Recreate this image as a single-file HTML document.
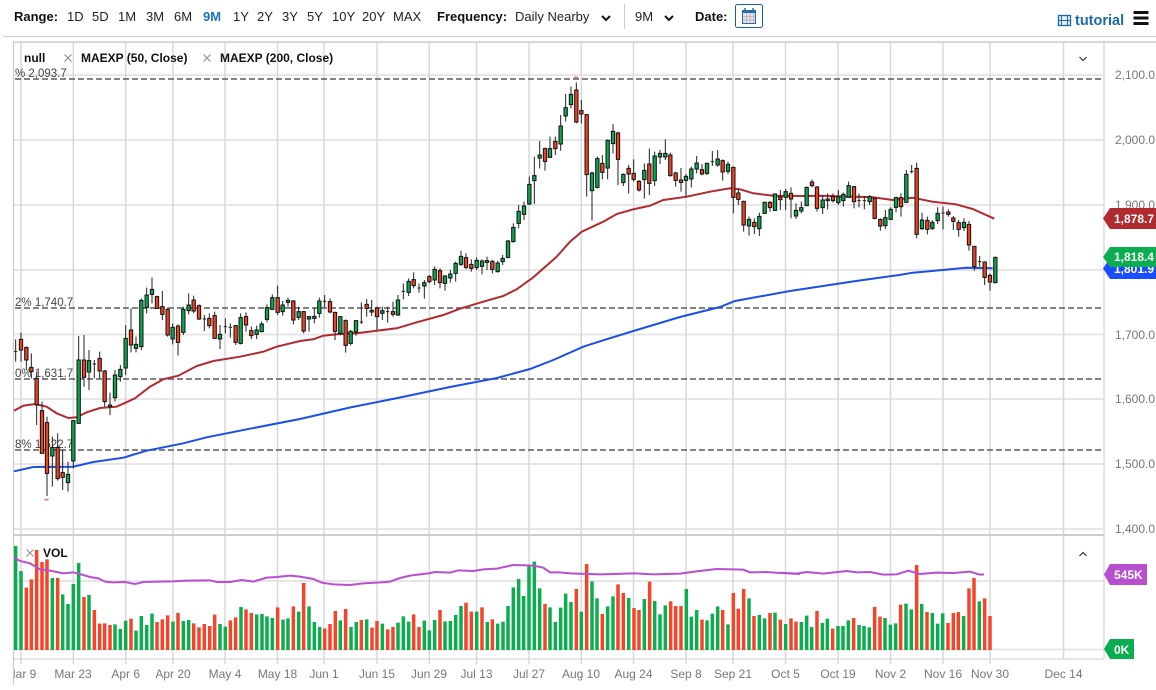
<!DOCTYPE html>
<html><head><meta charset="utf-8"><style>
html,body{margin:0;padding:0;background:#fff;width:1156px;height:690px;overflow:hidden}
svg{display:block;font-family:"Liberation Sans",sans-serif}
.w{fill:none;stroke:#222;stroke-width:3}
.g{fill:#0aa650;stroke:#111;stroke-width:3}
.r{fill:#ee4023;stroke:#111;stroke-width:3}
.vg{fill:none;stroke:#0aae4f;stroke-width:10.5}
.vr{fill:none;stroke:#f4452a;stroke-width:10.5}
.t{font-size:13px;fill:#222}
.b{font-size:13px;font-weight:bold;fill:#111}
.l{font-size:12px;font-weight:bold;fill:#111}
.ax{font-size:12px;fill:#777;text-anchor:middle}
.pr{font-size:12px;fill:#777}
.fb{font-size:11.5px;fill:#444}
.tag{font-size:12px;font-weight:bold;fill:#fff}
</style></head><body>
<svg width="1156" height="690" viewBox="0 0 1156 690" xmlns="http://www.w3.org/2000/svg">
<defs><clipPath id="cl"><rect x="14" y="42" width="1090" height="645"/></clipPath></defs>

<!-- toolbar -->
<text class="b" x="14" y="21">Range:</text>
<g class="t">
<text class="t" x="67" y="21">1D</text><text class="t" x="92" y="21">5D</text><text class="t" x="118" y="21">1M</text><text class="t" x="146" y="21">3M</text><text class="t" x="174" y="21">6M</text>
<text x="203" y="21" style="font-size:13px;font-weight:bold;fill:#1a6fc0">9M</text>
<text class="t" x="233" y="21">1Y</text><text class="t" x="257" y="21">2Y</text><text class="t" x="282" y="21">3Y</text><text class="t" x="307" y="21">5Y</text><text class="t" x="332" y="21">10Y</text><text class="t" x="362" y="21">20Y</text><text class="t" x="393" y="21">MAX</text>
</g>
<text class="b" x="437" y="21">Frequency:</text>
<text class="t" x="515" y="21">Daily Nearby</text>
<path d="M602 16l4 4 4-4" fill="none" stroke="#111" stroke-width="2"/>
<path d="M624.500 4V29" stroke="#ccc" stroke-width="1"/>
<text class="t" x="635" y="21">9M</text>
<path d="M665 16l4 4 4-4" fill="none" stroke="#111" stroke-width="2"/>
<text class="b" x="695" y="21">Date:</text>
<rect x="735.500" y="4.500" width="27" height="23" rx="2" fill="#fff" stroke="#1a5fa0"/>
<rect x="742.500" y="10.500" width="13" height="13" fill="#dbe6f2" stroke="#2a6cab"/>
<rect x="742" y="10" width="14" height="3" fill="#2a6cab"/>
<path d="M745 8v4M753 8v4" stroke="#2a6cab" stroke-width="1.500"/>
<path d="M746.500 13v10M750 13v10M753.500 13v10M743 16.500h12M743 20h12" stroke="#c98f8f" stroke-width=".6"/>
<rect x="1058.500" y="15.500" width="12" height="10" fill="#e8f0f8" stroke="#1a6aaf" stroke-width="1.300"/>
<path d="M1061.500 15.500v10M1067.500 15.500v10M1058.500 20.500h12" stroke="#1a6aaf" stroke-width="1"/>
<text x="1075" y="25" style="font-size:14.500px;font-weight:bold;fill:#1a6aaf">tutorial</text>
<path d="M1133.500 12.500h15M1133.500 18h15M1133.500 23.500h15" stroke="#111" stroke-width="3"/>

<path d="M3 36.500H1156" stroke="#ccc" stroke-width="1"/>
<path d="M13 42H1156" stroke="#ccc" stroke-width="1.500"/>

<!-- grid -->
<path d="M14 75H1104M14 140H1104M14 205H1104M14 270H1104M14 334.500H1104M14 399H1104M14 464H1104M14 529H1104M14 581H1104M14 649.500H1104M14 659H1104" stroke="#e6e6e6" stroke-width="2"/>
<path d="M21 42V664M73.300 42V664M125.700 42V664M173 42V664M225 42V664M277.500 42V664M324 42V664M377 42V664M429.300 42V664M476.500 42V664M529 42V664M581.300 42V664M633.500 42V664M686 42V664M733 42V664M785.500 42V664M838 42V664M890.500 42V664M943 42V664M990 42V664M1063.500 42V659" stroke="#d8d8d8" stroke-width="1.500"/>
<path d="M13.500 42V685" stroke="#ccc" stroke-width="1.200"/>
<path d="M1104 42V659" stroke="#ddd" stroke-width="1.500"/>
<path d="M14 535H1104" stroke="#ccc" stroke-width="2"/>

<!-- fib lines -->
<path d="M15 79H1103M15 308H1103M15 379H1103M15 450H1103" stroke="#5a5a5a" stroke-width="1.600" stroke-dasharray="6 3" fill="none"/>
<text class="fb" x="15" y="77">% 2,093.7</text>
<text class="fb" x="15" y="306">2% 1,740.7</text>
<text class="fb" x="15" y="377">0% 1,631.7</text>
<text class="fb" x="15" y="448">8% 1,522.7</text>

<!-- MA50 -->
<path fill="none" stroke="#b02a30" stroke-width="2" d="M14 410.700L23.300 405.700 35 404 46.700 406.700 56.700 413.300 68.300 418 76.700 417.300 86.700 412.300 100 408 116.700 406.700 135 398.300 150 386.700 163.300 379.300 178.300 375.700 196.700 366 213.300 361 240 356.700 263.300 351.700 276.700 346.700 300 341 313.300 339.300 323.300 335.700 336.700 334.300 356.700 333.300 376.700 330.700 396.700 328.300 416.700 322.300 443.300 315 460 308.700 483.300 301.700 503.300 296 516.700 289.300 533.300 277.300 556.700 256.700 570 241.700 581.700 231.700 603.300 221.700 616.700 214 633.300 209.300 650 205.700 663.300 200 686.700 196.700 710 191.700 730 188.300 740 189.300 753.300 193.300 773.300 195.700 806.700 196 820 195.700 856 196.700 872.700 197.300 892.700 200 912.700 197.700 932.700 201.700 956 204.300 972.700 209 994.300 218.700"/>
<!-- MA200 -->
<path fill="none" stroke="#1a4fe8" stroke-width="2" d="M14 471.300L33.300 467 73.300 466.700 93.300 462 123.300 457.700 146.700 450.700 183.300 443.300 206.700 437.300 250 428.700 300 419 350 407.500 400 397.500 450 387 497 378 530 369 553.300 360 583.300 346.700 600 341.300 640 329 680 317 720 307 735 301 790 291 856 281 899.300 275 912.700 272.700 942.700 270 966 267.700 992.700 268.300"/>

<!-- candles -->
<g clip-path="url(#cl)">
<g transform="translate(0,290) scale(.33333)">
<path class="w" d="M47 148V215M63 128V215M79 170V240M94 190V265M110 245V405M126 335V490M141 380V618M157 440V590M173 430V572M188 480V600M204 515V605M220 390V535M236 138V400M252 135V290M267 180V300M283 210V265M299 185V265M314 240V350M330 308V375M345 240V335M361 225V275M42 185h10M278 222h10"/>
<path class="r" d="M58 148h10V180h-10zM74 172h10V210h-10zM89 232h10V245h-10zM105 265h10V345h-10zM121 362h10V490h-10zM136 398h10V550h-10zM168 472h10V566h-10zM183 548h10V562h-10zM247 210h10V262h-10zM294 205h10V243h-10zM309 243h10V335h-10z"/>
<path class="g" d="M152 473h10V498h-10zM199 553h10V578h-10zM215 392h10V513h-10zM231 210h10V400h-10zM262 212h10V246h-10zM325 345h10V350h-10zM340 255h10V323h-10zM356 238h10V260h-10z"/>
</g>
<g transform="translate(120,265) scale(.33333)">
<path class="w" d="M17 180V330M33 130V262M48 215V262M64 100V255M80 68V145M96 38V115M111 92V132M127 78V165M143 128V215M158 175V238M174 178V272M190 125V210M206 85V148M221 92V145M237 118V165M253 150V198M268 145V190M284 140V222M300 180V252M316 160V205M331 175V218M347 180V240M362 145V238M378 142V200M394 185V222M410 182V222M425 170V202M441 118V172M457 88V135M473 62V150M488 108V152M504 98V125M520 105V178M536 125V165M551 138V205M567 153V200M583 128V175M598 98V158M248 162h10M311 185h10M326 187h10"/>
<path class="r" d="M28 195h10V240h-10zM106 95h10V130h-10zM122 125h10V148h-10zM138 133h10V210h-10zM169 183h10V232h-10zM216 105h10V138h-10zM232 122h10V162h-10zM263 160h10V182h-10zM279 152h10V220h-10zM342 182h10V232h-10zM373 155h10V180h-10zM389 197h10V212h-10zM468 98h10V142h-10zM515 108h10V165h-10zM546 140h10V198h-10z"/>
<path class="g" d="M12 220h10V309h-10zM43 238h10V250h-10zM59 106h10V245h-10zM75 90h10V128h-10zM91 73h10V88h-10zM153 187h10V222h-10zM185 133h10V202h-10zM201 120h10V137h-10zM295 208h10V222h-10zM357 158h10V235h-10zM405 195h10V208h-10zM420 177h10V200h-10zM436 128h10V163h-10zM452 98h10V133h-10zM483 120h10V140h-10zM499 106h10V112h-10zM531 140h10V157h-10zM562 155h10V162h-10zM578 154h10V160h-10zM593 108h10V145h-10z"/>
</g>
<g transform="translate(300,200) scale(.33333)">
<path class="w" d="M74 285V322M90 295V340M105 335V420M121 348V405M137 358V458M152 390V436M168 360V407M184 307V372M200 297V350M215 300V348M231 320V390M247 320V360M263 320V368M279 305V350M294 285V348M310 250V298M326 235V288M341 217V265M357 250V278M373 240V296M388 225V250M404 200V255M420 205V265M435 225V272M451 210V248M467 185V245M483 152V198M498 160V208M514 178V215M530 172V210M546 178V223M561 170V210M577 180V220M593 183V218M608 165V195M624 120V175M640 70V128M656 15V85M69 304h10M179 366h10M352 264h10M258 335h10M305 274h10"/>
<path class="r" d="M85 305h10V336h-10zM100 337h10V394h-10zM132 362h10V436h-10zM195 313h10V325h-10zM226 324h10V350h-10zM274 335h10V343h-10zM336 239h10V257h-10zM383 230h10V245h-10zM415 212h10V248h-10zM493 173h10V202h-10zM509 193h10V205h-10zM572 184h10V208h-10z"/>
<path class="g" d="M116 350h10V400h-10zM147 394h10V430h-10zM163 362h10V396h-10zM210 331h10V336h-10zM242 332h10V340h-10zM289 300h10V345h-10zM321 244h10V277h-10zM368 248h10V258h-10zM399 208h10V240h-10zM430 228h10V250h-10zM446 222h10V234h-10zM462 190h10V220h-10zM478 169h10V193h-10zM525 181h10V203h-10zM541 183h10V199h-10zM556 182h10V187h-10zM588 189h10V215h-10zM603 175h10V185h-10zM619 123h10V172h-10zM635 82h10V125h-10zM651 34h10V70h-10z"/>
</g>
<g transform="translate(520,70) scale(.33333)">
<path class="w" d="M12 395V450M28 320V405M43 260V402M59 213V295M75 233V302M90 200V264M106 200V255M122 135V242M137 72V155M153 50V115M169 37V160M184 90V160M200 132V380M216 305V452M232 260V355M247 255V328M263 208V328M279 162V250M294 185V345M310 310V348M326 285V370M341 268V335M357 330V365M373 280V386M388 236V375M404 245V348M420 240V282M436 208V270M451 248V320M467 305V350M483 294V365M498 312V380M514 290V352M530 258V310M546 282V316M561 278V315M577 243V288M593 240V290M608 268V332M624 275V312M640 290V430M655 355V405M671 392V485M687 440V497M703 445V492M718 428V498M734 395V432M750 393V425M765 370V422M781 360V420M797 357V420M813 352V445M828 400V447M844 395V430M860 350V408M876 328V352M891 348V425M572 275h10"/>
<path class="r" d="M70 236h10V274h-10zM101 214h10V236h-10zM164 60h10V156h-10zM179 122h10V132h-10zM195 134h10V314h-10zM242 280h10V307h-10zM289 189h10V268h-10zM321 295h10V312h-10zM336 310h10V328h-10zM352 334h10V360h-10zM383 282h10V340h-10zM446 255h10V317h-10zM462 309h10V331h-10zM478 330h10V337h-10zM541 299h10V312h-10zM603 272h10V306h-10zM635 292h10V382h-10zM650 369h10V388h-10zM666 394h10V465h-10zM698 457h10V470h-10zM745 397h10V413h-10zM776 381h10V389h-10zM808 370h10V387h-10zM871 336h10V347h-10zM886 351h10V415h-10z"/>
<path class="g" d="M7 408h10V433h-10zM23 343h10V402h-10zM38 317h10V332h-10zM54 255h10V264h-10zM85 236h10V262h-10zM117 168h10V222h-10zM132 113h10V138h-10zM148 73h10V104h-10zM211 309h10V362h-10zM227 266h10V352h-10zM258 211h10V294h-10zM274 184h10V221h-10zM305 313h10V338h-10zM368 301h10V329h-10zM399 258h10V332h-10zM415 250h10V261h-10zM431 250h10V261h-10zM493 319h10V331h-10zM509 297h10V327h-10zM525 279h10V297h-10zM556 280h10V310h-10zM588 267h10V285h-10zM619 283h10V304h-10zM682 448h10V468h-10zM713 439h10V476h-10zM729 397h10V430h-10zM760 372h10V421h-10zM792 365h10V382h-10zM823 421h10V438h-10zM839 413h10V423h-10zM855 352h10V407h-10z"/>
</g>
<g transform="translate(780,160) scale(.33333)">
<path class="w" d="M128 105V162M143 100V148M159 100V128M175 90V135M190 98V140M206 65V114M222 78V145M237 100V142M253 108V148M269 105V135M284 112V178M232 122h10M248 122h10"/>
<path class="r" d="M154 109h10V122h-10zM217 80h10V125h-10zM279 115h10V175h-10z"/>
<path class="g" d="M123 120h10V143h-10zM138 117h10V122h-10zM170 111h10V128h-10zM185 103h10V122h-10zM201 77h10V112h-10zM264 110h10V125h-10z"/>
</g>
<g transform="translate(856,150) scale(.33333)">
<path class="w" d="M73 205V242M88 180V237M104 172V210M120 140V187M135 130V200M151 60V158M167 45V70M182 38V265M198 188V240M214 200V253M229 210V240M245 172V222M261 170V238M277 178V200M292 198V240M308 210V260M324 205V243M339 213V302M355 288V362M371 318V350M386 334V405M402 370V422M418 320V400M162 65h10M256 189h10M366 335h10"/>
<path class="r" d="M68 208h10V228h-10zM130 143h10V170h-10zM177 55h10V253h-10zM209 211h10V238h-10zM272 186h10V193h-10zM287 204h10V214h-10zM303 218h10V238h-10zM334 223h10V285h-10zM350 289h10V350h-10zM381 336h10V382h-10zM397 376h10V396h-10z"/>
<path class="g" d="M83 203h10V227h-10zM99 178h10V208h-10zM115 143h10V172h-10zM146 73h10V157h-10zM193 210h10V236h-10zM224 217h10V235h-10zM240 190h10V212h-10zM319 217h10V233h-10zM413 322h10V398h-10z"/>
</g>
</g>
<path d="M44.500 499q2 2 4 0M574 78q2-2 4 0" fill="none" stroke="#ee4023" stroke-width="1"/>

<!-- legend -->
<text class="l" x="24" y="62">null</text>
<path d="M64.500 54.500l7 7M71.500 54.500l-7 7M203.500 54.500l7 7M210.500 54.500l-7 7" stroke="#888" stroke-width="1"/>
<text class="l" x="81" y="62">MAEXP (50, Close)</text>
<text class="l" x="220" y="62">MAEXP (200, Close)</text>
<path d="M1079.500 57l3.500 3.500 3.500-3.500" fill="none" stroke="#333" stroke-width="1.200"/>

<!-- volume -->
<g clip-path="url(#cl)">
<g transform="translate(0,530) scale(.33333)">
<path class="vg" d="M47 48V360M63 123V360M157 144V360M188 193V360M204 222V360M220 162V360M236 99V360M267 195V360M345 283V360M361 297V360M377 272V360M408 302V360M424 258V360M440 285V360M456 251V360M519 275V360M550 273V360M566 270V360M660 282V360M676 290V360M723 231V360M770 253V360M786 252V360M801 259V360M817 264V360M849 269V360M864 265V360M896 245V360M927 229V360M943 276V360M959 291V360M1021 271V360M1053 291V360M1069 276V360M1100 268V360M1147 281V360M1194 278V360"/>
<path class="vr" d="M79 173V360M94 148V360M110 60V360M126 96V360M141 88V360M173 144V360M252 201V360M283 240V360M299 281V360M314 280V360M330 285V360M393 266V360M471 276V360M487 268V360M503 256V360M534 249V360M581 280V360M597 292V360M613 282V360M629 288V360M644 254V360M691 271V360M707 262V360M738 238V360M754 249V360M833 232V360M880 229V360M911 159V360M974 295V360M990 282V360M1006 243V360M1037 237V360M1084 270V360M1116 293V360M1131 273V360M1163 298V360M1179 291V360"/>
<path fill="none" stroke="#b84fd0" stroke-width="6" d="M42 82L60 93 90 100 120 118 150 122 190 130 220 127 250 135 270 141 295 145 315 155 340 157 375 156 405 162 430 156 480 155 520 154 560 152 630 151 650 156 690 156 725 150 760 155 800 143 830 141 870 137 900 140 940 147 965 158 1000 163 1050 165 1090 160 1130 158 1170 155 1200 144"/>
</g>
<g transform="translate(400,530) scale(.33333)">
<path class="vg" d="M10 259V360M26 275V360M73 272V360M88 301V360M104 270V360M135 274V360M151 273V360M167 255V360M183 228V360M230 245V360M262 276V360M293 281V360M309 275V360M324 228V360M340 172V360M356 147V360M371 198V360M387 107V360M403 95V360M419 175V360M450 232V360M466 276V360M482 233V360M497 191V360M513 216V360M544 245V360M576 154V360M591 205V360M623 229V360M639 199V360M686 204V360M733 207V360M764 213V360M780 253V360M796 226V360M859 177V360M874 260V360M890 240V360M921 271V360M937 251V360M953 229V360M984 283V360M1047 205V360M1078 255V360M1094 265V360M1125 248V360M1157 282V360"/>
<path class="vr" d="M41 253V360M57 291V360M120 240V360M198 218V360M214 245V360M246 232V360M277 268V360M435 222V360M529 177V360M560 102V360M607 252V360M654 163V360M670 189V360M702 234V360M717 240V360M749 155V360M812 214V360M827 228V360M843 228V360M906 269V360M968 240V360M1000 189V360M1015 236V360M1031 177V360M1062 258V360M1110 249V360M1141 269V360M1173 265V360M1188 275V360"/>
<path fill="none" stroke="#b84fd0" stroke-width="6" d="M0 144L30 137 85 130 105 126 150 128 175 121 220 123 250 118 290 116 340 105 400 107 430 113 450 127 480 127 510 130 600 133 700 130 760 133 840 131 890 124 950 117 1030 119 1050 127 1100 126 1140 129 1200 132"/>
</g>
<g transform="translate(780,530) scale(.33333)">
<path class="vg" d="M64 276V360M80 257V360M95 291V360M127 279V360M142 266V360M174 288V360M189 288V360M205 271V360M237 285V360M252 288V360M268 292V360M315 264V360M331 284V360M347 280V360M378 221V360M394 238V360M425 222V360M457 249V360M473 281V360M488 250V360M551 258V360M598 214V360"/>
<path class="vr" d="M111 243V360M158 296V360M221 264V360M284 231V360M300 260V360M362 224V360M410 105V360M441 246V360M504 279V360M520 249V360M535 246V360M567 175V360M582 144V360M614 205V360M630 258V360"/>
<path fill="none" stroke="#b84fd0" stroke-width="6" d="M0 128L50 131 80 126 130 131 200 123 230 127 270 126 310 134 350 133 385 122 420 132 470 128 520 129 570 125 600 134 612 133"/>
</g>
</g>
<path d="M26.500 549.500l7 7M33.500 549.500l-7 7" stroke="#888" stroke-width="1"/>
<text class="l" x="43" y="557">VOL</text>
<path d="M1079.500 556l3.500-3.500 3.500 3.500" fill="none" stroke="#333" stroke-width="1.200"/>

<!-- price axis -->
<g class="pr">
<text class="pr" x="1115" y="79">2,100.0</text>
<text class="pr" x="1115" y="144">2,000.0</text>
<text class="pr" x="1115" y="209">1,900.0</text>
<text class="pr" x="1115" y="339">1,700.0</text>
<text class="pr" x="1115" y="403">1,600.0</text>
<text class="pr" x="1115" y="468">1,500.0</text>
<text class="pr" x="1115" y="533">1,400.0</text>
</g>
<path d="M1103 218.500L1110 208H1156V229H1110Z" fill="#b02a30"/>
<text class="tag" x="1114" y="223">1,878.7</text>
<path d="M1103 268.500L1110 258H1156V279H1110Z" fill="#1a4dff"/>
<text class="tag" x="1114" y="273">1,801.9</text>
<path d="M1103 257L1110 247H1156V267H1110Z" fill="#0aae50"/>
<text class="tag" x="1114" y="261">1,818.4</text>
<path d="M1104 574.500L1110 564H1147V585H1110Z" fill="#b84fd0"/>
<text class="tag" x="1114" y="579">545K</text>
<path d="M1104 649L1110 639H1134V659H1110Z" fill="#0aae50"/>
<text class="tag" x="1114" y="654">0K</text>

<!-- date axis -->
<g clip-path="url(#cl)"><text class="ax" x="21" y="678">Mar 9</text></g>
<text class="ax" x="73" y="678">Mar 23</text>
<text class="ax" x="125.700" y="678">Apr 6</text>
<text class="ax" x="173" y="678">Apr 20</text>
<text class="ax" x="225" y="678">May 4</text>
<text class="ax" x="277.500" y="678">May 18</text>
<text class="ax" x="324" y="678">Jun 1</text>
<text class="ax" x="377" y="678">Jun 15</text>
<text class="ax" x="429" y="678">Jun 29</text>
<text class="ax" x="476.500" y="678">Jul 13</text>
<text class="ax" x="529" y="678">Jul 27</text>
<text class="ax" x="581" y="678">Aug 10</text>
<text class="ax" x="633.500" y="678">Aug 24</text>
<text class="ax" x="686" y="678">Sep 8</text>
<text class="ax" x="733" y="678">Sep 21</text>
<text class="ax" x="785.500" y="678">Oct 5</text>
<text class="ax" x="838" y="678">Oct 19</text>
<text class="ax" x="890.500" y="678">Nov 2</text>
<text class="ax" x="943" y="678">Nov 16</text>
<text class="ax" x="990" y="678">Nov 30</text>
<text class="ax" x="1063.500" y="678">Dec 14</text>
</svg>
</body></html>
